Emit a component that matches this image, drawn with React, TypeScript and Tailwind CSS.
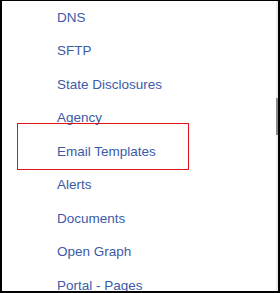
const items = [
  "DNS",
  "SFTP",
  "State Disclosures",
  "Agency",
  "Email Templates",
  "Alerts",
  "Documents",
  "Open Graph",
  "Portal - Pages",
]

export default function App() {
  return (
    <div className="w-[280px] h-[293px] bg-white border-t border-l-2 border-r-2 border-b-2 border-black flex overflow-hidden">
      <ul
        className="flex-1 pl-[55px] text-[13.5px] text-[#3b5ba8] overflow-hidden"
        style={{ fontFamily: '"Liberation Sans", Arial, sans-serif' }}
      >
        {items.map((label) => (
          <li key={label} className="relative h-[33.44px] leading-[33.44px] whitespace-nowrap">
            {label === "Email Templates" && (
              <span className="absolute left-[-40px] top-[-12px] w-[172px] h-[47px] border border-[#e0141c] pointer-events-none" />
            )}
            <a href="#" className="relative">
              {label}
            </a>
          </li>
        ))}
      </ul>
      <div className="w-[2px] bg-[#ececec] flex flex-col">
        <div className="mt-[97px] h-[37px] bg-[#8a8a8a]" />
      </div>
    </div>
  )
}
